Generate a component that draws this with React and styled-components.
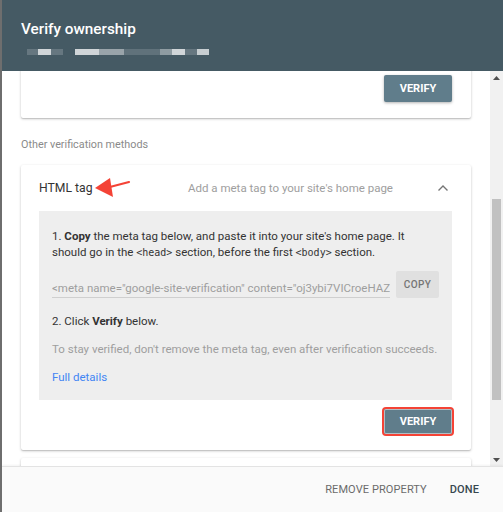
import { useLayoutEffect, useRef } from "react";
import styled, { createGlobalStyle } from "styled-components";

const GlobalStyle = createGlobalStyle`
  html, body {
    margin: 0;
    padding: 0;
    background: #6e6e6e;
    font-family: Roboto, "Liberation Sans", Arial, sans-serif;
    -webkit-font-smoothing: antialiased;
  }
`;

const Dialog = styled.div`
  margin-left: 2px;
  width: 501px;
  height: 512px;
  display: flex;
  flex-direction: column;
  background: #fff;
  overflow: hidden;
`;

const Header = styled.div`
  height: 71px;
  flex: none;
  box-sizing: border-box;
  background: #455a64;
  padding: 18px 19px 0;
`;

const Title = styled.h1`
  margin: 0;
  color: #fff;
  font-size: 15.3px;
  font-weight: 500;
  line-height: 22px;
`;

const Blurred = styled.svg`
  display: block;
  margin-top: 9px;
`;

const Middle = styled.div`
  flex: 1;
  display: flex;
  min-height: 0;
`;

const Viewport = styled.div`
  flex: 1;
  overflow: hidden;
  position: relative;
`;

const Content = styled.div`
  padding: 0 19px 24px;
`;

const Card = styled.div`
  background: #fff;
  border-radius: 2px;
  box-shadow: 0 1px 3px rgba(0, 0, 0, 0.2), 0 1px 1px rgba(0, 0, 0, 0.12);
  margin-top: ${(p) => p.$gap || 0}px;
  padding-bottom: ${(p) => (p.$pad === undefined ? 16 : p.$pad)}px;
  position: relative;
`;

const CardHead = styled.div`
  height: 46px;
  display: grid;
  grid-template-columns: 149px 1fr 24px;
  align-items: center;
  padding: 0 22px 0 18px;
`;

const CardTitle = styled.div`
  font-size: 12.2px;
  color: #333;
`;

const CardDesc = styled.div`
  font-size: 11.5px;
  color: #9e9e9e;
  white-space: nowrap;
`;

const Chevron = styled.svg`
  justify-self: end;
`;

const SectionLabel = styled.div`
  margin-top: 19px;
  font-size: 10.8px;
  line-height: 16px;
  color: #8a8a8a;
`;

const Panel = styled.div`
  margin: 0 19px 0 18px;
  background: #eeeeee;
  padding: 17px 13px 15px;
  font-size: 11.5px;
  line-height: 16px;
  color: #333;
`;

const Line = styled.p`
  margin: ${(p) => p.$top || 0}px 0 0;
  color: ${(p) => p.$color || "#333"};
  white-space: nowrap;
`;

const Mono = styled.span`
  font-family: "DejaVu Sans Mono", "Liberation Mono", monospace;
  font-size: 10px;
`;

const InputRow = styled.div`
  display: flex;
  align-items: stretch;
  gap: 6px;
  margin-top: 10px;
  height: 27px;
`;

const Field = styled.div`
  flex: 1;
  min-width: 0;
  display: flex;
  align-items: flex-end;
  border-bottom: 1px solid #cfcfcf;
  color: #9e9e9e;
  font-size: 11.5px;
  white-space: nowrap;
  overflow: hidden;
  padding-bottom: 1px;
`;

const CopyButton = styled.div`
  width: 43px;
  flex: none;
  background: #e0e0e0;
  border-radius: 2px;
  color: #757575;
  font-size: 10px;
  font-weight: 500;
  letter-spacing: 0.4px;
  display: flex;
  align-items: center;
  justify-content: center;
`;

const Link = styled.a`
  color: #4285f4;
  text-decoration: none;
`;

const Actions = styled.div`
  display: flex;
  justify-content: flex-end;
  padding-right: 19px;
  margin-top: ${(p) => p.$top || 0}px;
`;

const VerifyButton = styled.div`
  width: 68px;
  height: ${(p) => (p.$marked ? 25 : 27)}px;
  background: #607d8b;
  border-radius: 2px;
  color: #fff;
  font-size: 11px;
  font-weight: 700;
  display: flex;
  align-items: center;
  justify-content: center;
  box-shadow: ${(p) =>
    p.$marked
      ? "inset 0 0 0 1px #b0bec5, 0 0 0 2px #f44336"
      : "0 1px 3px rgba(0,0,0,0.3)"};
`;

const Placeholder = styled.div`
  height: ${(p) => p.$h || 120}px;
`;

const Annotation = styled.svg`
  position: absolute;
  left: 51px;
  top: 13px;
  pointer-events: none;
`;

const ScrollTrack = styled.div`
  width: 13px;
  flex: none;
  background: #f1f1f1;
  display: flex;
  flex-direction: column;
  align-items: center;
`;

const Arrow = styled.div`
  height: 13px;
  width: 13px;
  display: flex;
  align-items: center;
  justify-content: center;
  flex: none;
`;

const Thumb = styled.div`
  width: 9px;
  height: 201px;
  margin-top: 115px;
  background: #c1c1c1;
  flex: none;
`;

const Spacer = styled.div`
  flex: 1;
`;

const Footer = styled.div`
  height: 46px;
  flex: none;
  box-sizing: border-box;
  background: #fafafa;
  border-top: 1px solid #e3e3e3;
  box-shadow: 0 -1px 2px rgba(0, 0, 0, 0.05);
  display: flex;
  align-items: center;
  justify-content: flex-end;
  gap: 23px;
  padding-right: 24px;
`;

const FooterButton = styled.div`
  font-size: 11px;
  font-weight: ${(p) => (p.$primary ? 500 : 400)};
  color: ${(p) => (p.$primary ? "#37474f" : "#6b6b6b")};
  letter-spacing: 0.1px;
`;

const blur = [
  [6, 11, 0.18], [17, 13, 0.75], [30, 12, 0.18],
  [54, 24, 0.75], [78, 25, 0.45], [103, 36, 0.15],
  [139, 12, 0.4], [151, 13, 0.75], [164, 12, 0.18], [176, 12, 0.7],
];

export default function App() {
  const viewRef = useRef(null);
  const firstRef = useRef(null);

  useLayoutEffect(() => {
    const view = viewRef.current;
    const card = firstRef.current;
    const bottom =
      card.getBoundingClientRect().bottom - view.getBoundingClientRect().top + view.scrollTop;
    view.scrollTop = bottom - 47;
  }, []);

  return (
    <>
      <GlobalStyle />
      <Dialog>
        <Header>
          <Title>Verify ownership</Title>
          <Blurred width="200" height="6">
            {blur.map(([x, w, o], i) => (
              <rect key={i} x={x} y="0" width={w} height="6" fill="#fff" opacity={o} />
            ))}
          </Blurred>
        </Header>

        <Middle>
          <Viewport ref={viewRef}>
            <Content>
              <Card ref={firstRef} $gap={16}>
                <Placeholder />
                <Actions>
                  <VerifyButton>VERIFY</VerifyButton>
                </Actions>
              </Card>

              <SectionLabel>Other verification methods</SectionLabel>

              <Card $gap={12}>
                <CardHead>
                  <CardTitle>HTML tag</CardTitle>
                  <CardDesc>Add a meta tag to your site's home page</CardDesc>
                  <Chevron width="12" height="8" viewBox="0 0 12 8">
                    <path d="M1.5 6.5 L6 2 L10.5 6.5" fill="none" stroke="#757575" strokeWidth="1.4" />
                  </Chevron>
                </CardHead>
                <Annotation width="60" height="20" viewBox="0 0 60 20">
                  <path d="M34 10 L57 4" stroke="#f44336" strokeWidth="2.2" strokeLinecap="round" />
                  <path d="M23 10 L38 0 L41 19 Z" fill="#f44336" />
                </Annotation>
                <Panel>
                  <Line>
                    1. <b>Copy</b> the meta tag below, and paste it into your site's home page. It
                  </Line>
                  <Line>
                    should go in the <Mono>&lt;head&gt;</Mono> section, before the first <Mono>&lt;body&gt;</Mono> section.
                  </Line>
                  <InputRow>
                    <Field>&lt;meta name="google-site-verification" content="oj3ybi7VICroeHAZ</Field>
                    <CopyButton>COPY</CopyButton>
                  </InputRow>
                  <Line $top={15}>
                    2. Click <b>Verify</b> below.
                  </Line>
                  <Line $top={12} $color="#9e9e9e">
                    To stay verified, don't remove the meta tag, even after verification succeeds.
                  </Line>
                  <Line $top={12}>
                    <Link href="#">Full details</Link>
                  </Line>
                </Panel>
                <Actions $top={9}>
                  <VerifyButton $marked>VERIFY</VerifyButton>
                </Actions>
              </Card>

              <Card $gap={8} $pad={0}>
                <Placeholder $h={260} />
              </Card>
            </Content>
          </Viewport>

          <ScrollTrack>
            <Arrow>
              <svg width="7" height="4" viewBox="0 0 7 4">
                <path d="M0 4 L3.5 0 L7 4 Z" fill="#505050" />
              </svg>
            </Arrow>
            <Thumb />
            <Spacer />
            <Arrow>
              <svg width="7" height="4" viewBox="0 0 7 4">
                <path d="M0 0 L3.5 4 L7 0 Z" fill="#505050" />
              </svg>
            </Arrow>
          </ScrollTrack>
        </Middle>

        <Footer>
          <FooterButton>REMOVE PROPERTY</FooterButton>
          <FooterButton $primary>DONE</FooterButton>
        </Footer>
      </Dialog>
    </>
  );
}
